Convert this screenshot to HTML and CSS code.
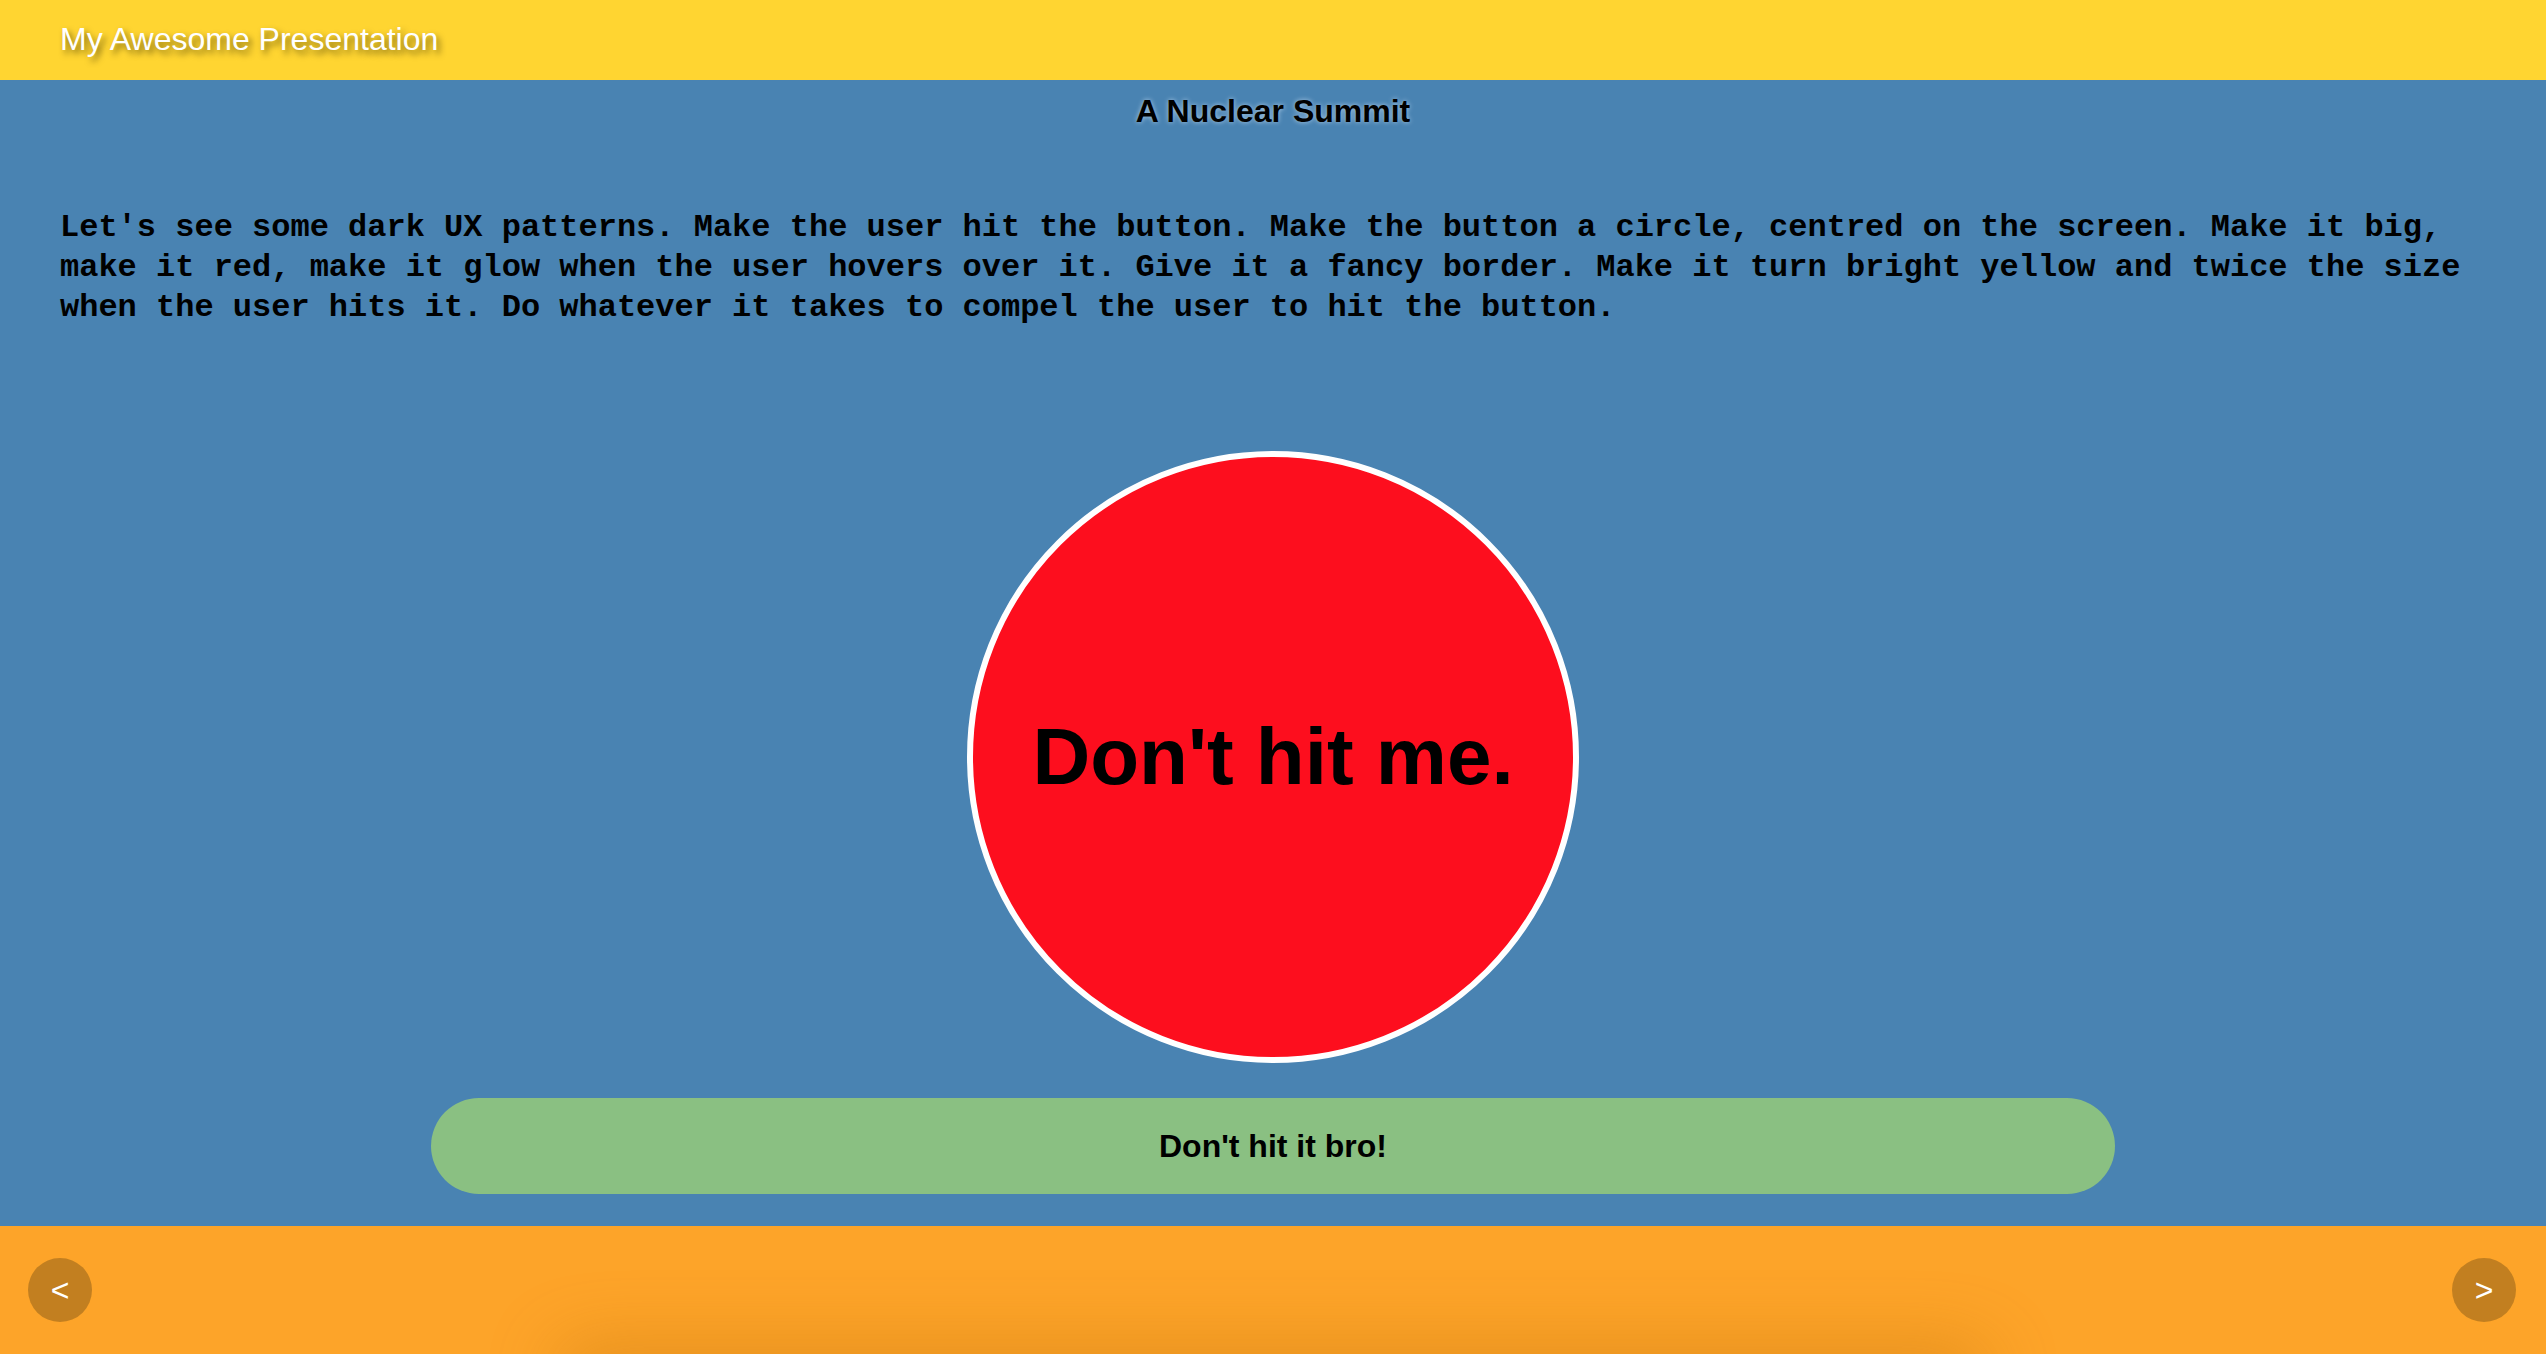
FILE: index.html
```html
<!DOCTYPE html>
<html lang="en">
<head>
<meta charset="utf-8">
<title>My Awesome Presentation</title>
<link rel="stylesheet" href="styles.css">
</head>
<body>
  <header class="topbar">
    <span class="deck-title">My Awesome Presentation</span>
  </header>
  <main class="slide">
    <h1 class="slide-title">A Nuclear Summit</h1>
    <p class="intro">Let's see some dark UX patterns. Make the user hit the button. Make the button a circle, centred on the screen. Make it big, make it red, make it glow when the user hovers over it. Give it a fancy border. Make it turn bright yellow and twice the size when the user hits it. Do whatever it takes to compel the user to hit the button.</p>
    <div class="stage">
      <button class="big-red">Don't hit me.</button>
    </div>
    <button class="pill">Don't hit it bro!</button>
  </main>
  <footer class="bottombar">
    <button class="nav">&lt;</button>
    <button class="nav">&gt;</button>
  </footer>
</body>
</html>
```

FILE: styles.css
```css
html, body {
  margin: 0;
  padding: 0;
}

body {
  height: 100vh;
  display: flex;
  flex-direction: column;
  overflow: hidden;
  background: #4983b2;
  font-family: "Liberation Sans", Arial, sans-serif;
}

.topbar {
  flex: 0 0 80px;
  height: 80px;
  background: #ffd531;
  display: flex;
  align-items: center;
  padding: 0 0 3px 60px;
  box-sizing: border-box;
}

.deck-title {
  color: #ffffff;
  font-size: 32px;
  line-height: 36px;
  text-shadow: 3px 4px 6px rgba(60, 50, 0, 0.65);
}

.slide {
  flex: 1 1 auto;
  display: flex;
  flex-direction: column;
  align-items: center;
  background: #4983b2;
}

.slide-title {
  margin: 13px 0 0;
  font-size: 32px;
  line-height: 36px;
  font-weight: bold;
  color: #000;
  text-shadow: 0 0 5px rgba(210, 230, 250, 0.75);
}

.intro {
  align-self: stretch;
  margin: 79px 0 0;
  padding: 0 60px;
  font-family: "Liberation Mono", "Courier New", monospace;
  font-weight: bold;
  font-size: 32px;
  line-height: 40px;
  color: #000;
}

.stage {
  margin-top: 123px;
  display: flex;
  justify-content: center;
}

.big-red {
  width: 612px;
  height: 612px;
  box-sizing: border-box;
  border-radius: 50%;
  border: 6px solid #ffffff;
  background: #fd0e1e;
  color: #000;
  font-family: "Liberation Sans", Arial, sans-serif;
  font-weight: bold;
  font-size: 80px;
  padding: 0;
  display: flex;
  align-items: center;
  justify-content: center;
  cursor: pointer;
}

.pill {
  margin-top: 35px;
  width: 1684px;
  height: 96px;
  border: none;
  border-radius: 48px;
  background: #8ac082;
  color: #000;
  font-family: "Liberation Sans", Arial, sans-serif;
  font-weight: bold;
  font-size: 32px;
  padding: 0;
  cursor: pointer;
}

.bottombar {
  flex: 0 0 128px;
  height: 128px;
  background: #fda429;
  display: flex;
  align-items: center;
  justify-content: space-between;
  padding: 0 30px 0 28px;
  box-sizing: border-box;
  position: relative;
  overflow: hidden;
}

.bottombar::after {
  content: "";
  position: absolute;
  left: 50%;
  bottom: -40px;
  width: 1420px;
  height: 40px;
  margin-left: -710px;
  border-radius: 20px;
  box-shadow: 0 0 70px 6px rgba(190, 110, 10, 0.45);
  pointer-events: none;
}

.nav {
  width: 64px;
  height: 64px;
  border: none;
  border-radius: 50%;
  background: #c27f20;
  color: #ffffff;
  font-family: "Liberation Sans", Arial, sans-serif;
  font-size: 32px;
  line-height: 1;
  padding: 0;
  display: flex;
  align-items: center;
  justify-content: center;
  position: relative;
  z-index: 1;
  cursor: pointer;
}
```
